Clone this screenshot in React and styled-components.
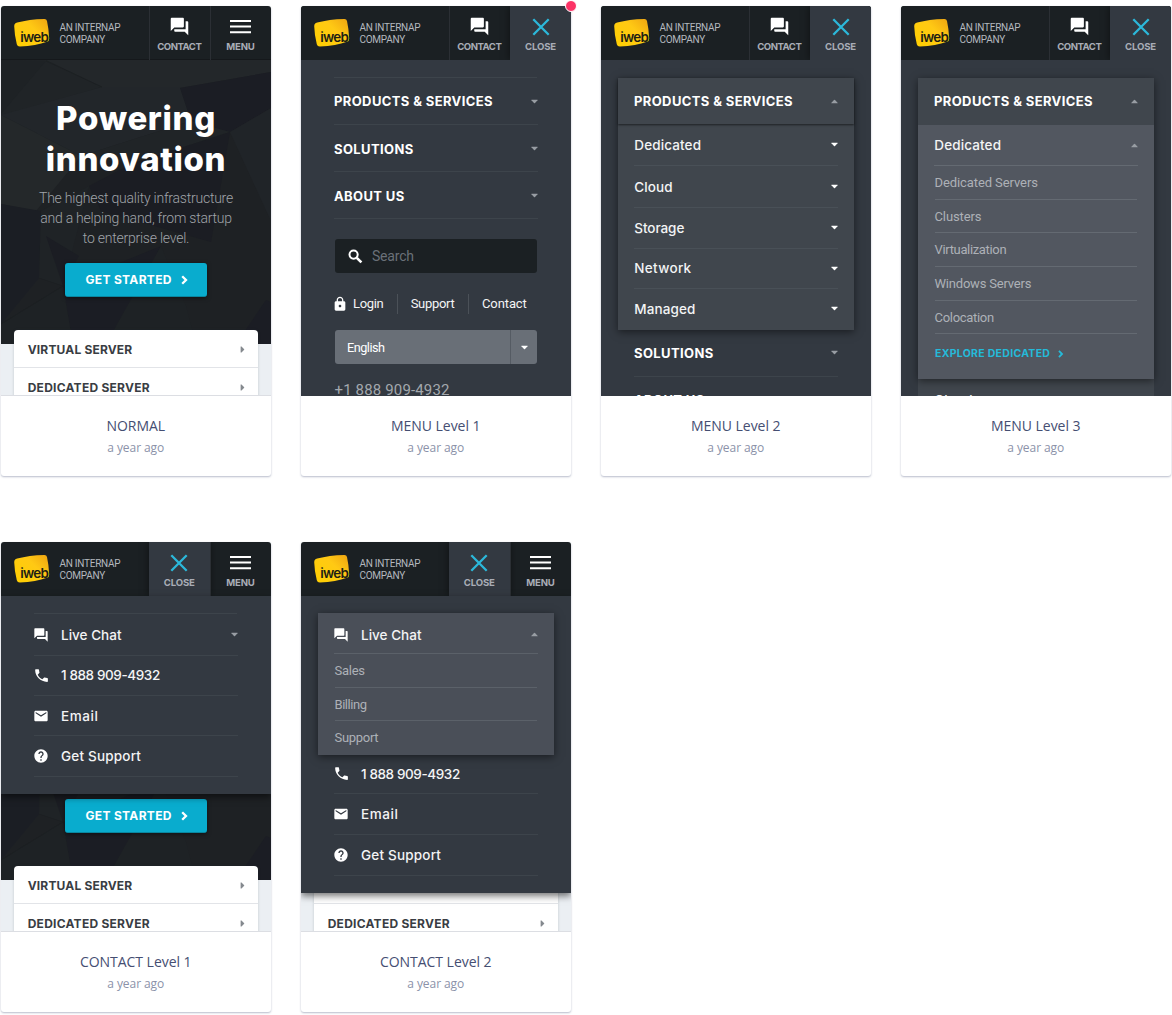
import React from "react";
import styled, { createGlobalStyle, css } from "styled-components";
import { MdForum, MdPhone, MdEmail, MdHelp, MdLock } from "react-icons/md";

const Global = createGlobalStyle`
  * { box-sizing: border-box; }
  body { margin: 0; background: #fff; font-family: Roboto, "Liberation Sans", sans-serif; }
`;

const display = css`font-family: Inter, "Liberation Sans", sans-serif;`;

const Board = styled.main`
  display: grid;
  grid-template-columns: repeat(4, 270px);
  gap: 66px 30px;
  padding: 6px 0 0 1px;
  height: 1015px;
  width: 1172px;
  overflow: hidden;
  align-content: start;
`;
const Card = styled.article`
  position: relative;
  height: 470px;
  border-radius: 3px;
  background: #fff;
  box-shadow: 0 1px 2px rgba(58, 68, 110, 0.36);
`;
const Dot = styled.span`
  position: absolute;
  top: -6px;
  right: -5.5px;
  width: 12px;
  height: 12px;
  border-radius: 50%;
  border: 1px solid #fff;
  background: #fc3366;
`;
const Preview = styled.div`
  position: relative;
  height: 390px;
  overflow: hidden;
  border-radius: 3px 3px 0 0;
  background: ${p => (p.$menu ? "#333941" : "#ebeff3")};
`;
const Edge = styled.div`
  position: absolute;
  inset: auto 0 0 0;
  height: 1px;
  background: #dcdee3;
`;
const Caption = styled.div`
  display: flex;
  flex-direction: column;
  align-items: center;
  padding: 20px 0.5px 0 0;
  font-family: "Open Sans", "Liberation Sans", sans-serif;
`;
const Title = styled.div`
  font-size: 14px;
  line-height: 20px;
  letter-spacing: -0.04px;
  color: #454e72;
`;
const Stamp = styled.div`
  margin-top: 4px;
  font-size: 12px;
  line-height: 16px;
  letter-spacing: -0.07px;
  color: #8b92a9;
`;

/* header */
const Header = styled.header`
  position: relative;
  display: grid;
  grid-template-columns: 147.5px 61px 61.5px;
  height: 54px;
  background: #1b2023;
  border-bottom: ${p => (p.$line ? "1px solid #15181b" : "0")};
`;
const Brand = styled.div`
  display: flex;
  gap: 8.5px;
  padding: 12px 0 0 13px;
`;
const Tagline = styled.div`
  padding-top: 4px;
  font-size: 10px;
  line-height: 12px;
  letter-spacing: -0.26px;
  color: #b4b8bf;
`;
const Tab = styled.div`
  display: flex;
  flex-direction: column;
  align-items: center;
  justify-content: space-between;
  height: 54px;
  padding: 10px 0.5px 7px 0;
  border-left: 1px solid ${p => (p.$active ? "#333941" : "#2b2f34")};
  background: ${p => (p.$active ? "#333941" : "transparent")};
  box-shadow: ${p => (p.$active ? "0 0 8px rgba(0,0,0,.5)" : "none")};
  clip-path: inset(0 ${p => (p.$active ? "-10px" : "0")} 0 ${p => (p.$active ? "-10px" : "0")});
  color: #fff;
`;
const TabLabel = styled.span`
  ${display}
  font-size: 9.6px;
  line-height: 12px;
  font-weight: 700;
  letter-spacing: ${p => p.$ls}px;
  color: #a9adb6;
`;
const TabIcon = styled.span`
  display: flex;
  align-items: center;
  justify-content: center;
  height: 21px;
`;

/* landing page */
const Hero = styled.section`
  position: relative;
  display: flex;
  flex-direction: column;
  align-items: center;
  height: 284px;
  overflow: hidden;
  text-align: center;
`;
const Facets = styled.svg`
  position: absolute;
  inset: 0;
`;
const Intro = styled.div`
  position: relative;
  height: 187px;
  padding-top: 38px;
`;
const Headline = styled.h1`
  ${display}
  margin: 0;
  font-size: 33px;
  line-height: 41px;
  font-weight: 800;
  letter-spacing: 0.66px;
  color: #fff;
`;
const Blurb = styled.p`
  margin: 8px 0 0;
  font-weight: 300;
  font-size: 14px;
  line-height: 20px;
  letter-spacing: -0.23px;
  color: #a0a4a9;
`;
const Cta = styled.button`
  position: relative;
  ${display}
  display: flex;
  align-items: center;
  gap: 9px;
  margin-top: 16px;
  padding: 0 19px 0 20.5px;
  width: 142px;
  height: 34px;
  border: 0;
  border-bottom: 1px solid #0a87a0;
  border-radius: 3px;
  background: #09acce;
  box-shadow: 0 1px 4px rgba(0, 0, 0, 0.5);
  font-size: 12px;
  font-weight: 700;
  letter-spacing: 0.32px;
  white-space: nowrap;
  color: #fff;
`;
const ServerList = styled.div`
  position: relative;
  margin: -14px 13.5px 0 13px;
  border-radius: 4px 4px 0 0;
  background: #fff;
  box-shadow: 0 0 3px rgba(40, 50, 60, 0.2);
`;
const Server = styled.div`
  ${display}
  display: flex;
  align-items: center;
  justify-content: space-between;
  height: 38px;
  padding: 2px 13px 0 13.7px;
  border-bottom: 1px solid #e2e4e8;
  font-size: 12px;
  font-weight: 700;
  letter-spacing: ${p => p.$ls}px;
  color: #393d43;
`;

/* menus */
const Menu = styled.nav`
  padding-top: ${p => p.$top ?? 17}px;
`;
const Drop = styled.nav`
  position: absolute;
  inset: 54px 0 auto 0;
  height: ${p => p.$h}px;
  padding-top: 17px;
  background: #333941;
  box-shadow: 0 3px 7px rgba(0, 0, 0, 0.55);
`;
const Section = styled.div`
  ${display}
  display: flex;
  align-items: center;
  justify-content: space-between;
  height: 47px;
  margin: 0 33.5px 0 33px;
  padding-top: ${p => p.$drop ?? 0}px;
  border-bottom: 1px solid #3d444b;
  font-size: 13px;
  font-weight: 700;
  letter-spacing: 0.38px;
  color: #fff;
`;
const TopRule = styled.div`
  height: 1px;
  margin: 0 34px 0 33px;
  background: #3d444b;
`;
const Panel = styled.div`
  position: relative;
  margin: 0 17px 0 17px;
  background: ${p => p.$bg ?? "#40464d"};
  box-shadow: 0 2px 8px rgba(0, 0, 0, 0.5);
`;
const PanelHead = styled.div`
  ${display}
  display: flex;
  align-items: center;
  justify-content: space-between;
  height: ${p => (p.$flat ? 47 : 46)}px;
  padding: 0 16.5px ${p => (p.$flat ? 1 : 0)}px 16px;
  background: #40464d;
  box-shadow: ${p => (p.$flat ? "none" : "0 1px 2px rgba(0, 0, 0, 0.55)")};
  font-size: 13px;
  font-weight: 700;
  letter-spacing: 0.38px;
  color: #fff;
`;
const Item = styled.div`
  ${display}
  display: flex;
  align-items: center;
  height: ${p => p.$h ?? 40.5}px;
  margin: 0 ${p => (p.$inset ? 16.5 : 33.5)}px 0 ${p => (p.$inset ? 16.3 : 33.3)}px;
  padding-top: ${p => p.$drop ?? 0}px;
  border-bottom: 1px solid ${p => p.$rule ?? "#3d444b"};
  font-size: 13.5px;
  font-weight: 500;
  letter-spacing: ${p => p.$ls ?? 0.12}px;
  color: #f3f4f5;
`;
const Glyph = styled.span`
  display: flex;
  width: 28px;
  margin-left: -1.3px;
  color: #fff;
`;
const Label = styled.span`
  flex: 1;
`;
const Link = styled.div`
  display: flex;
  align-items: center;
  height: 33.7px;
  margin: 0 17px 0 16.5px;
  border-bottom: 1px solid ${p => p.$rule ?? "#646a72"};
  font-size: 13px;
  letter-spacing: ${p => p.$ls ?? -0.2}px;
  color: #adb1b7;
`;
const Explore = styled.div`
  ${display}
  display: flex;
  align-items: center;
  gap: 8px;
  height: 45px;
  padding: 0 0 6px 17px;
  font-size: 10.5px;
  font-weight: 700;
  letter-spacing: 0.29px;
  color: #25bad9;
`;
const Below = styled.div`
  margin: 0 17px;
  background: #40464d;
`;

const SearchBox = styled.div`
  display: flex;
  align-items: center;
  gap: 9.5px;
  height: 34px;
  margin: 20px 34px 0 33.5px;
  padding-left: 13px;
  border-radius: 3px;
  background: #1b2023;
  font-size: 14px;
  letter-spacing: -0.2px;
  color: #6a7078;
`;
const Links = styled.div`
  display: flex;
  align-items: center;
  height: 20px;
  margin: 20.5px 34px 0 33px;
  font-size: 13px;
  color: #f3f4f5;
`;
const Quick = styled.span`
  display: flex;
  align-items: center;
  height: 20px;
  padding: 0 13.5px 0 13px;
  letter-spacing: ${p => p.$ls}px;
  border-left: 1px solid #4b5158;
  &:first-child { padding-left: 0; padding-right: 13.4px; border: 0; }
  svg { margin: 0 5px 0 -2px; color: #fff; }
`;
const Select = styled.div`
  display: grid;
  grid-template-columns: 1fr 27px;
  align-items: center;
  height: 34px;
  margin: 16.5px 34px 0 33.5px;
  padding-left: 12.5px;
  border-radius: 3px;
  background: #696f77;
  font-size: 12.7px;
  letter-spacing: -0.5px;
  color: #fff;
`;
const SelectArrow = styled.span`
  display: flex;
  align-items: center;
  justify-content: center;
  height: 34px;
  border-left: 1px solid #555b63;
`;
const Phone = styled.div`
  margin: 16px 0 0 33.5px;
  font-size: 15px;
  line-height: 20px;
  letter-spacing: 0.15px;
  color: #a3a8ad;
`;

const Caret = ({ up, bright }) => (
  <svg width="7" height="5" viewBox="0 0 7 5" fill={bright ? "#fff" : "#989da3"}>
    <path d={up ? "M0.6 4.3 Q0 4.3 .4 3.7 L3 1 Q3.5 .5 4 1 L6.6 3.7 Q7 4.3 6.4 4.3Z" : "M0.6 .7 Q0 .7 .4 1.3 L3 4 Q3.5 4.5 4 4 L6.6 1.3 Q7 .7 6.4 .7Z"} />
  </svg>
);
const SideCaret = () => (
  <svg width="5" height="7" viewBox="0 0 5 7" fill="#84898e">
    <path d="M.6 .6 L1.5 .4 L4.4 3.5 L1.5 6.6 L.6 6.4Z" />
  </svg>
);
const Chevron = ({ size = 10, color = "#fff" }) => (
  <svg width={size * 0.7} height={size} viewBox="0 0 7 10" fill="none" stroke={color} strokeWidth="2.3">
    <path d="M1.2 1.2 L5 5 L1.2 8.8" />
  </svg>
);
const Lens = () => (
  <svg width="15" height="15" viewBox="0 0 15 15" fill="none" stroke="#fff">
    <circle cx="5.6" cy="5.6" r="4.1" strokeWidth="2" />
    <path d="M8.8 8.8 L13.4 13.4" strokeWidth="2.6" />
  </svg>
);
const Cross = () => (
  <svg width="18" height="18" viewBox="0 0 18 18" stroke="#2cb8da" strokeWidth="2.3">
    <path d="M1.3 1.3 L16.7 16.7 M16.7 1.3 L1.3 16.7" />
  </svg>
);
const Burger = () => (
  <svg width="21" height="14" viewBox="0 0 21 14" fill="#fff">
    <path d="M0 0h21v2h-21z M0 5.6h21v2h-21z M0 11.2h21v2h-21z" />
  </svg>
);
const Logo = () => (
  <svg width="37" height="30" viewBox="0 0 37 30">
    <defs>
      <linearGradient id="gold" x1="0" y1="1" x2="1" y2="0.2">
        <stop offset="0" stopColor="#ffd000" />
        <stop offset=".65" stopColor="#ffc914" />
        <stop offset="1" stopColor="#f2ab12" />
      </linearGradient>
    </defs>
    <path d="M3.2 4.6 Q15 1.2 30.4 .9 Q32.6 .9 33 3 Q34.8 11 35.2 20.4 Q35.3 23 33 23.8 Q22 27.8 6 28.6 Q3.4 28.7 2.8 26.2 Q0.4 16 .2 8.2 Q.2 5.3 3.2 4.6Z" fill="url(#gold)" />
    <text x="6.3" y="23.8" fontFamily="Inter, sans-serif" fontSize="13.4" fontWeight="600" letterSpacing="-.75" fill="#201d14">iweb</text>
  </svg>
);

function TopBar({ open }) {
  return (
    <Header $line={!open}>
      <Brand>
        <Logo />
        <Tagline>AN INTERNAP<br />COMPANY</Tagline>
      </Brand>
      <Tab $active={open === "contact"}>
        <TabIcon>{open === "contact" ? <Cross /> : <MdForum size={21} />}</TabIcon>
        {open === "contact" ? <TabLabel $ls={-0.2}>CLOSE</TabLabel> : <TabLabel $ls={-0.5}>CONTACT</TabLabel>}
      </Tab>
      <Tab $active={open === "menu"}>
        <TabIcon>{open === "menu" ? <Cross /> : <Burger />}</TabIcon>
        {open === "menu" ? <TabLabel $ls={-0.2}>CLOSE</TabLabel> : <TabLabel $ls={-0.2}>MENU</TabLabel>}
      </Tab>
    </Header>
  );
}

function Landing({ intro = true, cta = true, virtual = true }) {
  return (
    <>
      <Hero>
        <Facets width="270" height="284" viewBox="0 54 270 284">
          <rect y="54" width="270" height="284" fill="#1e2124" />
          <path d="M0 54H45L101 81L0 110Z" fill="#202427" />
          <path d="M45 54H270V66L179 82L101 81Z" fill="#23272a" />
          <path d="M45 55L0 108V54Z" fill="#1e2225" />
          <path d="M101 81H179L190 115L80 150L0 109Z" fill="#22262a" />
          <path d="M0 109L80 150L35 205L0 198Z" fill="#24282a" />
          <path d="M179 82L270 66V102L229 126L190 115Z" fill="#1b1d24" />
          <path d="M190 115L229 126L130 158L80 150Z" fill="#202427" />
          <path d="M229 126L130 158L88 180L100 205L210 236Z" fill="#1b1d23" />
          <path d="M229 126L270 102V215Z" fill="#202428" />
          <path d="M0 198L40 205L38 272L0 318Z" fill="#1b1e24" />
          <path d="M40 205L88 180L62 280L38 272Z" fill="#1f2326" />
          <path d="M45 230L78 250L62 280Z" fill="#1b1d23" />
          <path d="M62 280L160 240L105 338H72Z" fill="#1b1d24" />
          <path d="M160 240L185 300L195 338H105Z" fill="#1e2225" />
          <path d="M0 318L62 280L72 338H0Z" fill="#1e2225" />
          <path d="M265 294L270 296V338H235Z" fill="#1b1d24" />
          <path d="M45 55L101 81M0 318L62 280L38 272" stroke="#1b1e21" strokeWidth=".5" fill="none" />
        </Facets>
        <Intro>
          {intro && (
            <>
              <Headline>Powering<br />innovation</Headline>
              <Blurb>The highest quality infrastructure<br />and a helping hand, from startup<br />to enterprise level.</Blurb>
            </>
          )}
        </Intro>
        {cta && <Cta>GET STARTED <Chevron /></Cta>}
      </Hero>
      <ServerList>
        <Server $ls={0.17}>{virtual && <>VIRTUAL SERVER <SideCaret /></>}</Server>
        <Server $ls={0.25}>DEDICATED SERVER <SideCaret /></Server>
      </ServerList>
    </>
  );
}

const Shot = ({ title, dot, menu, children }) => (
  <Card>
    <Preview $menu={menu}>{children}{!menu && <Edge />}</Preview>
    {dot && <Dot />}
    <Caption>
      <Title>{title}</Title>
      <Stamp>a year ago</Stamp>
    </Caption>
  </Card>
);

const ContactRows = ({ heights }) => (
  <>
    <Item $h={heights[0]} $ls={-0.4}><Glyph><MdPhone size={17} /></Glyph>1 888 909-4932</Item>
    <Item $h={heights[1]} $ls={0.6}><Glyph><MdEmail size={16} /></Glyph>Email</Item>
    <Item $h={heights[2]} $ls={0.2}><Glyph><MdHelp size={16} /></Glyph>Get Support</Item>
  </>
);

export default function App() {
  return (
    <>
      <Global />
      <Board>
        <Shot title="NORMAL">
          <TopBar />
          <Landing />
        </Shot>

        <Shot title="MENU Level 1" menu dot>
          <TopBar open="menu" />
          <Menu>
            <TopRule />
            <Section>PRODUCTS &amp; SERVICES <Caret /></Section>
            <Section $drop={1}>SOLUTIONS <Caret /></Section>
            <Section $drop={1}>ABOUT US <Caret /></Section>
          </Menu>
          <SearchBox><Lens />Search</SearchBox>
          <Links>
            <Quick $ls={-0.35}><MdLock size={16} />Login</Quick>
            <Quick $ls={-0.3}>Support</Quick>
            <Quick $ls={-0.1}>Contact</Quick>
          </Links>
          <Select>English<SelectArrow><Caret bright /></SelectArrow></Select>
          <Phone>+1 888 909-4932</Phone>
        </Shot>

        <Shot title="MENU Level 2" menu>
          <TopBar open="menu" />
          <Menu $top={18}>
            <Panel>
              <PanelHead>PRODUCTS &amp; SERVICES <Caret up /></PanelHead>
              <Item $inset $h={42} $rule="#495057"><Label>Dedicated</Label><Caret bright /></Item>
              <Item $inset $h={42} $rule="#495057"><Label>Cloud</Label><Caret bright /></Item>
              <Item $inset $rule="#495057" $ls={-0.07}><Label>Storage</Label><Caret bright /></Item>
              <Item $inset $rule="#495057" $ls={0.3}><Label>Network</Label><Caret bright /></Item>
              <Item $inset $rule="transparent"><Label>Managed</Label><Caret bright /></Item>
            </Panel>
            <Section>SOLUTIONS <Caret /></Section>
            <Section>ABOUT US <Caret /></Section>
          </Menu>
        </Shot>

        <Shot title="MENU Level 3" menu>
          <TopBar open="menu" />
          <Menu $top={18}>
            <Panel $bg="#525760">
              <PanelHead $flat>PRODUCTS &amp; SERVICES <Caret up /></PanelHead>
              <Item $inset $h={41} $rule="#646a72"><Label>Dedicated</Label><Caret up /></Item>
              <Link $ls={-0.09}>Dedicated Servers</Link>
              <Link $ls={-0.1}>Clusters</Link>
              <Link $ls={-0.34}>Virtualization</Link>
              <Link>Windows Servers</Link>
              <Link $ls={-0.3}>Colocation</Link>
              <Explore>EXPLORE DEDICATED <Chevron size={8} color="#25bad9" /></Explore>
            </Panel>
            <Below>
              <Item $inset $h={42} $rule="#495057"><Label>Cloud</Label><Caret bright /></Item>
            </Below>
          </Menu>
        </Shot>

        <Shot title="CONTACT Level 1">
          <TopBar open="contact" />
          <Landing intro={false} />
          <Drop $h={198}>
            <TopRule />
            <Item $h={41.5} $drop={1} $ls={0.02}><Glyph><MdForum size={16} /></Glyph><Label>Live Chat</Label><Caret /></Item>
            <ContactRows heights={[40.3, 40.5, 40.5]} />
          </Drop>
        </Shot>

        <Shot title="CONTACT Level 2">
          <TopBar open="contact" />
          <Landing intro={false} cta={false} virtual={false} />
          <Drop $h={296.5}>
            <Panel $bg="#4a4f58">
              <Item $inset $h={41} $drop={3} $rule="#5b6169" $ls={0.02}><Glyph><MdForum size={16} /></Glyph><Label>Live Chat</Label><Caret up /></Item>
              <Link $rule="#5b6169" $ls={-0.26}>Sales</Link>
              <Link $rule="#5b6169" $ls={-0.45}>Billing</Link>
              <Link $rule="transparent" $ls={-0.3}>Support</Link>
            </Panel>
            <ContactRows heights={[38.5, 41.5, 40.5]} />
          </Drop>
        </Shot>
      </Board>
    </>
  );
}
